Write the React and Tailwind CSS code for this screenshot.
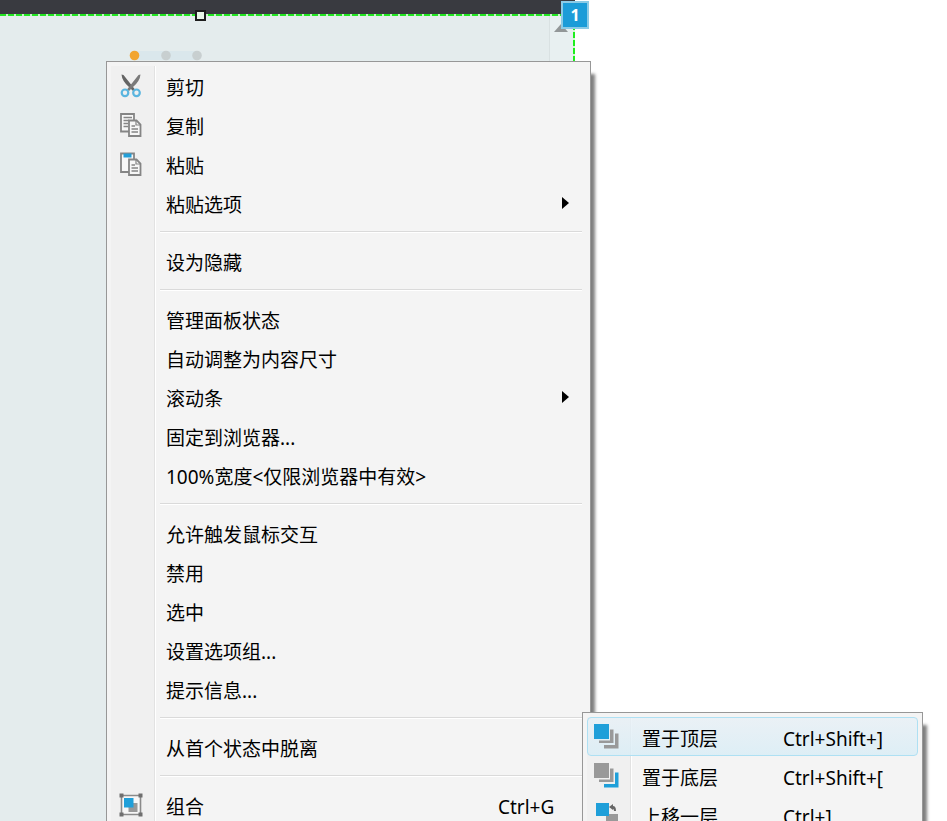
import React from 'react';
import clsx from 'clsx';

function CutIcon() {
  return (
    <svg width="22" height="24" viewBox="0 0 22 24" fill="none">
      <path d="M1.5 0.5L3.5 1L15 15.5L13 17L9 13Q2 7 1.5 0.5Z" fill="#646464" />
      <path d="M20.5 0.5L18.5 1L7 15.5L9 17L13 13Q20 7 20.5 0.5Z" fill="#7a7a7a" />
      <circle cx="5" cy="18.8" r="3.3" stroke="#5bb5df" strokeWidth="2.2" />
      <circle cx="16.5" cy="18.8" r="3.3" stroke="#5bb5df" strokeWidth="2.2" />
    </svg>
  );
}

function FrontPage() {
  return (
    <>
      <path d="M9 7.5H16.5L20.5 11.5V23H9Z" fill="#f7f7f7" stroke="#858585" strokeWidth="1.8" />
      <path d="M16 7.5V12H20.5" stroke="#858585" strokeWidth="1.2" />
      <path d="M11.5 13H15M11.5 16H18M11.5 19H18" stroke="#858585" strokeWidth="1.4" />
    </>
  );
}

function CopyIcon() {
  return (
    <svg width="22" height="24" viewBox="0 0 22 24" fill="none">
      <path d="M1 1H14V18.5H1Z" fill="#f7f7f7" stroke="#858585" strokeWidth="1.8" />
      <path d="M3.5 4.5H12M3.5 7.5H9M3.5 10.5H8M3.5 13.5H8" stroke="#858585" strokeWidth="1.5" />
      <FrontPage />
    </svg>
  );
}

function PasteIcon() {
  return (
    <svg width="22" height="24" viewBox="0 0 22 24" fill="none">
      <path d="M1 1.5H14V20H1Z" fill="#f7f7f7" stroke="#858585" strokeWidth="1.8" />
      <path d="M3.5 1.5H11.5V5.5H3.5Z" fill="#239fd8" />
      <FrontPage />
    </svg>
  );
}

function GroupIcon() {
  return (
    <svg width="24" height="24" viewBox="0 0 24 24">
      <path d="M2.5 2.5H21.5V21.5H2.5Z" fill="#f7f7f7" stroke="#8a8a8a" strokeWidth="1.6" />
      <path d="M9.5 10H18.5V19H9.5Z" fill="#999999" />
      <path d="M5 5H14.5V14.5H5Z" fill="#1f9fd9" />
      <path d="M0.5 0.5h4v4h-4zM19.5 0.5h4v4h-4zM0.5 19.5h4v4h-4zM19.5 19.5h4v4h-4z" fill="#6f6f6f" />
    </svg>
  );
}

function StackIcon({ front, back }) {
  return (
    <svg width="26" height="26" viewBox="0 0 26 26">
      <path d="M0 0H15V15H0Z" fill={front} />
      <path d="M16 5.5H19.5V19H5V16.5H16Z" fill="#999999" />
      <path d="M21 9.5H24.5V24.5H10V21H21Z" fill={back} />
    </svg>
  );
}

function ForwardIcon() {
  return (
    <svg width="26" height="26" viewBox="0 0 26 26">
      <path d="M12 12H24V24H12Z" fill="#999999" />
      <path d="M2 1H15V14H2Z" fill="#1f9fd9" />
      <path d="M15 5L19 2V4Q22 4 22 9H20Q20 7 19 7V8Z" fill="#666666" />
    </svg>
  );
}

const mainGroups = [
  [
    { label: '剪切', icon: <CutIcon /> },
    { label: '复制', icon: <CopyIcon /> },
    { label: '粘贴', icon: <PasteIcon /> },
    { label: '粘贴选项', submenu: true },
  ],
  [{ label: '设为隐藏' }],
  [
    { label: '管理面板状态' },
    { label: '自动调整为内容尺寸' },
    { label: '滚动条', submenu: true },
    { label: '固定到浏览器...' },
    { label: '100%宽度<仅限浏览器中有效>' },
  ],
  [
    { label: '允许触发鼠标交互' },
    { label: '禁用' },
    { label: '选中' },
    { label: '设置选项组...' },
    { label: '提示信息...' },
  ],
  [{ label: '从首个状态中脱离' }],
  [{ label: '组合', icon: <GroupIcon />, shortcut: 'Ctrl+G' }],
];

const orderGroups = [
  [
    { label: '置于顶层', icon: <StackIcon front="#1f9fd9" back="#999999" />, shortcut: 'Ctrl+Shift+]', active: true },
    { label: '置于底层', icon: <StackIcon front="#999999" back="#1f9fd9" />, shortcut: 'Ctrl+Shift+[' },
    { label: '上移一层', icon: <ForwardIcon />, shortcut: 'Ctrl+]' },
  ],
];

function MenuItem({ item, shortcutClass }) {
  return (
    <li role="none">
      <button
        type="button"
        role="menuitem"
        aria-haspopup={item.submenu ? 'menu' : undefined}
        className={clsx(
          'flex h-[39px] w-full items-center rounded border text-left whitespace-nowrap',
          item.active
            ? 'border-[#aee0f3] bg-linear-to-b from-[#e8f0f6]/80 to-[#d8edf6]/80'
            : 'border-transparent'
        )}
      >
        <span className="flex w-[38px] shrink-0 justify-center">{item.icon}</span>
        <span className="ml-4 flex-1 pt-1">{item.label}</span>
        {item.shortcut && <span className={clsx('shrink-0 pt-1', shortcutClass)}>{item.shortcut}</span>}
        {item.submenu && (
          <svg className="mr-4 shrink-0" width="7" height="12" viewBox="0 0 7 12">
            <path d="M0 0L7 6L0 12Z" fill="#000" />
          </svg>
        )}
      </button>
    </li>
  );
}

function ContextMenu({ label, groups, className, shortcutClass }) {
  return (
    <div
      className={clsx(
        'absolute border border-[#979797] bg-[#f4f4f4] p-1 shadow-[5px_12px_3px_-1px_rgba(0,0,0,0.5)]',
        className
      )}
    >
      <ul
        role="menu"
        aria-label={label}
        className="bg-[linear-gradient(90deg,#f0f0f0_43px,#e2e2e2_43px,#e2e2e2_44px,#ffffff_44px,#ffffff_45px,transparent_45px)]"
      >
        {groups.map((group, index) => (
          <React.Fragment key={index}>
            {index > 0 && (
              <li role="separator" className="pt-[9px] pr-1 pb-[8px] pl-[49px]">
                <div className="h-[2px] border-t border-[#dadada] bg-white" />
              </li>
            )}
            {group.map((item) => (
              <MenuItem key={item.label} item={item} shortcutClass={shortcutClass} />
            ))}
          </React.Fragment>
        ))}
      </ul>
    </div>
  );
}

function Canvas() {
  return (
    <div className="relative flex h-full w-[575px] flex-col bg-[#e4eced]">
      <div className="h-[14px] shrink-0 bg-[#393a40]" />
      <div className="h-[2px] shrink-0 bg-[repeating-linear-gradient(90deg,#22e622_0_6px,#c8f5c8_6px_8px)]" />
      <div className="flex flex-1">
        <div className="flex-1" />
        <div className="w-6 border-l border-[#d9e1e2] bg-[#e8f0f1] pt-2">
          <svg className="ml-1" width="14" height="8" viewBox="0 0 14 8">
            <path d="M7 0L14 8H0Z" fill="#929798" />
          </svg>
        </div>
        <div className="w-[2px] bg-[repeating-linear-gradient(180deg,#1eee1e_0_6px,#d5f7d5_6px_8px)]" />
      </div>

      {/* carousel pager */}
      <svg className="absolute top-[50px] left-[129px]" width="74" height="11" viewBox="0 0 74 11">
        <path d="M6 1H68V10H6Z" fill="#dae7ec" />
        <circle cx="5.5" cy="5.5" r="4.8" fill="#f2a530" />
        <circle cx="37" cy="5.5" r="4.8" fill="#c8cfd0" />
        <circle cx="68" cy="5.5" r="4.8" fill="#c8cfd0" />
      </svg>

      {/* resize handle */}
      <div className="absolute top-[10px] left-[195px] size-[11px] border-2 border-[#1c1c1c] bg-[#e8f5e8]" />

      {/* footnote number */}
      <div className="absolute top-[1px] left-[561px] flex size-[28px] items-center justify-center border-2 border-[#8ccbe6] bg-[#1c9cd8] text-base font-bold text-white">
        1
      </div>
    </div>
  );
}

export default function App() {
  return (
    <main className="relative h-screen overflow-hidden bg-white font-['Noto_Sans','Noto_Sans_CJK_SC',sans-serif] text-[19px] leading-6 text-black">
      <Canvas />
      <ContextMenu
        label="编辑"
        groups={mainGroups}
        className="top-[61px] left-[106px] w-[485px]"
        shortcutClass="w-[87px]"
      />
      <ContextMenu
        label="顺序"
        groups={orderGroups}
        className="top-[712px] left-[582px] w-[341px]"
        shortcutClass="w-[134px]"
      />
    </main>
  );
}
